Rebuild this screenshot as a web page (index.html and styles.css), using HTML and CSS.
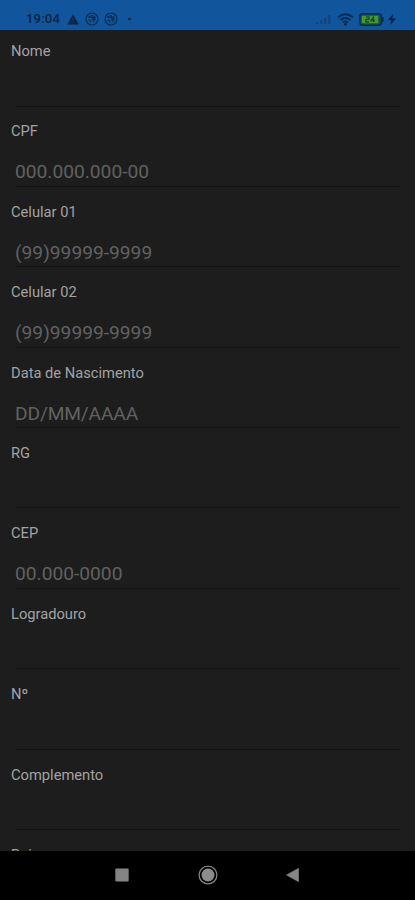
FILE: index.html
```html
<!DOCTYPE html>
<html lang="pt-BR">
<head>
<meta charset="utf-8">
<title>Cadastro</title>
<link rel="stylesheet" href="styles.css">
</head>
<body>
<header class="status">
  <span class="clock">19:04</span>
  <svg class="warn" width="12" height="11" viewBox="0 0 12 11"><path d="M6 0.5L11.8 10.5H0.2Z" fill="#0a2340"/><path d="M6 4v3M6 8v1.2" stroke="#104278" stroke-width="1.1"/></svg>
  <svg class="app" width="14" height="14" viewBox="0 0 14 14" fill="none" stroke="#0a2b50" stroke-width="1.1"><circle cx="7" cy="7" r="6"/><path d="M3 5.500q3-2.500 5-1.500M5 6q3-2 5 1.500L7 7M3.500 8.500q2-1 2.500 2M9 4l1.500 2M7.500 7.500l2 2.500"/></svg>
  <svg class="app" width="14" height="14" viewBox="0 0 14 14" fill="none" stroke="#0a2b50" stroke-width="1.1"><circle cx="7" cy="7" r="6"/><path d="M3 5.500q3-2.500 5-1.500M5 6q3-2 5 1.500L7 7M3.500 8.500q2-1 2.500 2M9 4l1.500 2M7.500 7.500l2 2.500"/></svg>
  <span class="dot"></span>
  <span class="space"></span>
  <svg class="signal" width="16" height="10" viewBox="0 0 16 10" fill="#104783"><path d="M0 10V8h2.500v2zM4 10V6h2.500v4zM8 10V4h2.500v6zM12 10V1h2.500v9z"/></svg>
  <svg class="wifi" width="17" height="13" viewBox="0 0 17 13" fill="none" stroke="#0a2b50" stroke-width="1.800"><path d="M1 4.200q7.500-6 15 0M3.500 7q5-4 10 0M6 9.500q2.500-2 5 0"/><circle cx="8.500" cy="11.300" r=".6"/></svg>
  <svg class="battery" width="26" height="13" viewBox="0 0 26 13"><rect x=".8" y=".8" width="21.500" height="11.400" rx="2.800" fill="#174d58" stroke="#0a2b50" stroke-width="1.500"/><rect x="2.800" y="2.800" width="16.500" height="7.400" rx="1" fill="#429b29"/><path d="M23 4h1.500v5H23z" fill="#0a2b50"/><path d="M7 4h3v2.300H7V9h3M14.500 9V4l-2.500 3.500h4" fill="none" stroke="#164c29" stroke-width="1.300"/></svg>
  <svg class="bolt" width="8" height="11" viewBox="0 0 8 11"><path d="M5 0L0 6h3L2.500 11L8 4.500H4.500Z" fill="#0a2340"/></svg>
</header>
<main class="form">
  <label class="field"><span class="name">Nome</span><span class="entry"></span></label>
  <label class="field"><span class="name">CPF</span><span class="entry">000.000.000-00</span></label>
  <label class="field"><span class="name">Celular 01</span><span class="entry">(99)99999-9999</span></label>
  <label class="field"><span class="name">Celular 02</span><span class="entry">(99)99999-9999</span></label>
  <label class="field"><span class="name">Data de Nascimento</span><span class="entry date">DD/MM/AAAA</span></label>
  <label class="field"><span class="name">RG</span><span class="entry"></span></label>
  <label class="field"><span class="name">CEP</span><span class="entry">00.000-0000</span></label>
  <label class="field"><span class="name">Logradouro</span><span class="entry"></span></label>
  <label class="field"><span class="name">Nº</span><span class="entry"></span></label>
  <label class="field"><span class="name">Complemento</span><span class="entry"></span></label>
  <label class="field"><span class="name">Bairro</span><span class="entry"></span></label>
</main>
<nav class="navbar">
  <svg width="20" height="20" viewBox="0 0 20 20"><rect x="3.300" y="3.500" width="13.400" height="13" rx="1" fill="#858585"/></svg>
  <svg width="20" height="20" viewBox="0 0 20 20"><circle cx="10" cy="10" r="8.900" fill="none" stroke="#858585" stroke-width="1.300"/><circle cx="10" cy="10" r="6.500" fill="#8c8c8c"/></svg>
  <svg width="20" height="20" viewBox="0 0 20 20"><path d="M3.500 10L15.500 3.300V16.700Z" fill="#858585" stroke="#858585" stroke-width=".6" stroke-linejoin="round"/></svg>
</nav>
</body>
</html>
```
FILE: styles.css
```css
* { box-sizing: border-box; }
body {
  margin: 0;
  width: 415px;
  height: 900px;
  display: flex;
  flex-direction: column;
  overflow: hidden;
  background: #1d1d1d;
  font-family: Roboto, sans-serif;
}
svg { display: block; flex: none; }
.status {
  flex: none;
  height: 30px;
  display: flex;
  align-items: center;
  padding: 8px 19px 0 26px;
  background: #11559c;
}
.clock {
  width: 41px;
  font-size: 13px;
  font-weight: 500;
  line-height: 14px;
  letter-spacing: 0.2px;
  color: #0a2340;
}
.app { margin-left: 6px; }
.app + .app { margin-left: 5px; }
.dot {
  width: 3px;
  height: 2px;
  margin-left: 10px;
  background: #0a2b50;
}
.space { flex: 1; }
.wifi { margin-left: 5px; }
.battery { margin-left: 5px; }
.bolt { margin-left: 3px; }
.form {
  flex: 1;
  min-height: 0;
  overflow: hidden;
  padding-top: 11px;
}
.field {
  display: block;
  height: 80.4px;
  padding: 0 11px;
}
.name {
  display: block;
  height: 20px;
  font-size: 14.7px;
  line-height: 20px;
  color: #a3a3a3;
}
.entry {
  display: block;
  height: 45.5px;
  margin: 0 3px 0 4px;
  padding-top: 19px;
  border-bottom: 1.5px solid #131313;
  font-size: 19.2px;
  line-height: 24px;
  color: #616161;
  white-space: nowrap;
}
.date { letter-spacing: -0.15px; }
.navbar {
  flex: none;
  height: 49px;
  display: flex;
  justify-content: center;
  gap: 65.5px;
  padding-top: 14px;
  background: #000;
}
```
